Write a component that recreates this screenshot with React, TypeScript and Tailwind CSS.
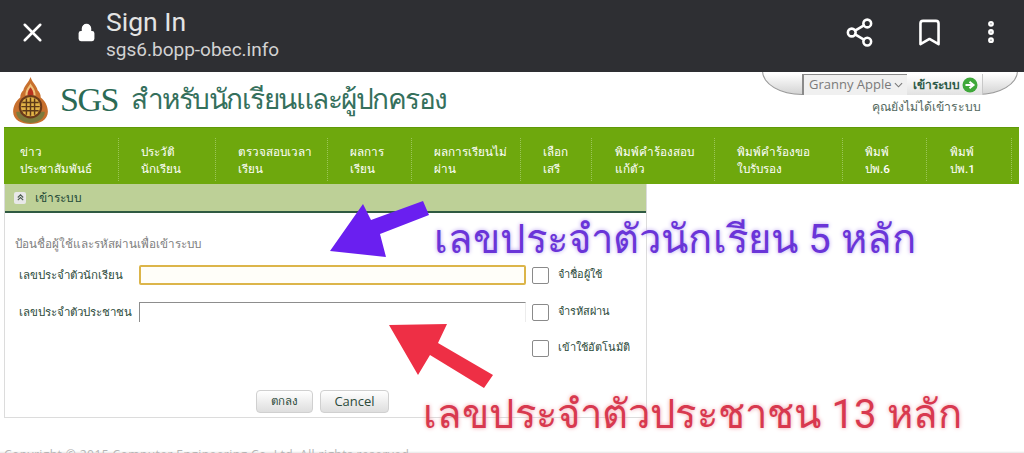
import { Bookmark, Lock, MoreVertical, Share2, X } from "lucide-react";

const menu = [
  { a: "ข่าว", b: "ประชาสัมพันธ์", w: "w-[115px]", p: "pl-[16px]" },
  { a: "ประวัติ", b: "นักเรียน", w: "w-[97px]", p: "pl-[22px]" },
  { a: "ตรวจสอบเวลา", b: "เรียน", w: "w-[112px]", p: "pl-[22px]" },
  { a: "ผลการ", b: "เรียน", w: "w-[84px]", p: "pl-[22px]" },
  { a: "ผลการเรียนไม่", b: "ผ่าน", w: "w-[109px]", p: "pl-[22px]" },
  { a: "เลือก", b: "เสรี", w: "w-[71px]", p: "pl-[22px]" },
  { a: "พิมพ์คำร้องสอบ", b: "แก้ตัว", w: "w-[123px]", p: "pl-[23px]" },
  { a: "พิมพ์คำร้องขอ", b: "ใบรับรอง", w: "w-[128px]", p: "pl-[22px]" },
  { a: "พิมพ์", b: "ปพ.6", w: "w-[84px]", p: "pl-[22px]" },
  { a: "พิมพ์", b: "ปพ.1", w: "w-[85px]", p: "pl-[23px]" },
];

function Check({ label }: { label: string }) {
  return (
    <div className="flex items-center h-[18px]">
      <div className="w-[17px] h-[17px] rounded-[2px] border border-[#8a8a8a] bg-white" />
      <span className="ml-[9px] text-[11px] font-medium text-[#2c4a3a]">{label}</span>
    </div>
  );
}

export default function App() {
  return (
    <div className="relative w-[1024px] h-[453px] overflow-hidden bg-white font-['Roboto','Noto_Sans',sans-serif]">
      {/* browser bar */}
      <div className="h-[72px] pb-[8px] bg-[#2e2f33] flex items-center text-white relative z-10">
        <X className="ml-[17px] w-[31px] h-[31px]" strokeWidth={2} />
        <Lock className="ml-[29px] w-[19px] h-[21px] fill-white" strokeWidth={2} />
        <div className="ml-[10px] flex flex-col mt-[4px]">
          <span className="text-[26.5px] leading-[30px] text-[#e4e4e4]">Sign In</span>
          <span className="text-[19px] leading-[25px] text-[#d2d2d2]">sgs6.bopp-obec.info</span>
        </div>
        <div className="ml-auto flex items-center">
          <Share2 className="w-[31px] h-[31px]" strokeWidth={2} />
          <Bookmark className="ml-[39px] w-[31px] h-[31px]" strokeWidth={2} />
          <MoreVertical className="ml-[32px] mr-[19px] w-[28px] h-[28px]" strokeWidth={3} />
        </div>
      </div>

      {/* logo row */}
      <div className="h-[55px] flex items-center relative">
        <svg viewBox="0 0 34 46" className="ml-[13px] w-[35px] h-[47px] mt-[1px]">
          <path d="M17 0 C19 6 23 8 24 13 C26 15 27 17 27 20 C31 23 34 28 34 34 C34 42 26 46 17 46 C8 46 0 42 0 34 C0 28 3 23 7 20 C7 17 8 15 10 13 C11 8 15 6 17 0Z" fill="#c8702e" />
          <path d="M17 6 C19 10 22 12 22 18 L12 18 C12 12 15 10 17 6Z" fill="#f0c27a" />
          <path d="M17 10 C18.5 12 20 14 20 18 L14 18 C14 14 15.5 12 17 10Z" fill="#b8321f" />
          <path d="M3 34 C3 41 10 45 17 45 C24 45 31 41 31 34Z" fill="#7d7a3c" />
          <circle cx="17" cy="29" r="11.5" fill="#6b3a1a" />
          <circle cx="17" cy="29" r="9.5" fill="#e2b347" />
          <path d="M9 25 H25 M8 29 H26 M9 33 H25 M13 21 V37 M17 20 V38 M21 21 V37" stroke="#5e3a18" strokeWidth="1.4" />
        </svg>
        <span className="ml-[12px] text-[34px] leading-none text-[#2b6a55] font-['Liberation_Serif',serif] tracking-[-1.5px]">SGS</span>
        <span className="ml-[13px] text-[28px] leading-none text-[#35705c] tracking-[-1.5px]">สำหรับนักเรียนและผู้ปกครอง</span>

        <div className="absolute left-[762px] top-[-30px] w-[256px] h-[53px] rounded-b-[40px_24px] border border-[#9a9a9a] bg-gradient-to-b from-white from-[60%] to-[#d4d4d4]" />
        <div className="absolute left-[802px] top-[2px] flex h-[21px] items-center">
          <div className="w-[105px] h-[21px] flex items-center justify-between pl-[5px] pr-[4px] bg-[#f0f0f0] border-l-2 border-t border-[#8a8a8a] text-[13px] text-[#7a7a7a] font-['Open_Sans',sans-serif]">
            <span>Granny Apple</span>
            <svg viewBox="0 0 10 6" className="w-[9px] h-[6px]">
              <path d="M1 1 L5 5 L9 1" fill="none" stroke="#777" strokeWidth="1.2" />
            </svg>
          </div>
          <div className="w-[76px] h-[21px] pl-[6px] flex items-center gap-[2px] bg-gradient-to-b from-white to-[#e2e2e2] border-r border-[#c8c8c8]">
            <span className="text-[12px] font-bold text-[#2d5a48]">เข้าระบบ</span>
            <svg viewBox="0 0 16 16" className="w-[16px] h-[16px]">
              <circle cx="8" cy="8" r="7.5" fill="#3fa83a" />
              <path d="M3.5 8 H10 M7.5 4.8 L11.5 8 L7.5 11.2" fill="none" stroke="#fff" strokeWidth="2" />
            </svg>
          </div>
        </div>
        <span className="absolute right-[43px] top-[26px] text-[12.2px] text-[#52675d]">คุณยังไม่ได้เข้าระบบ</span>
      </div>

      {/* menu */}
      <div className="ml-[4px] w-[1015px] h-[57px] flex items-end pb-[3px] bg-[#6ea80d] border-t border-[#5f9a08]">
        {menu.map((m) => (
          <div
            key={m.a + m.b}
            className={`${m.w} ${m.p} h-[43px] pt-[2px] flex flex-col justify-center border-r border-dotted border-[#9cc658] text-[11.7px] font-medium leading-[16.5px] text-white`}
          >
            <span>{m.a}</span>
            <span>{m.b}</span>
          </div>
        ))}
      </div>

      {/* login panel */}
      <div className="ml-[4px] w-[643px] h-[234px] border-x border-b border-[#dcdcdc]">
        <div className="h-[29px] bg-[#bdd097] border-b-2 border-[#2f5a42] flex items-center pl-[9px]">
          <div className="w-[12px] h-[12px] bg-[#e8e8e8] rounded-[2px] flex items-center justify-center">
            <svg viewBox="0 0 10 10" className="w-[9px] h-[9px]">
              <path d="M2 5 L5 2 L8 5 M2 8 L5 5 L8 8" fill="none" stroke="#4a5a50" strokeWidth="1.2" />
            </svg>
          </div>
          <span className="ml-[9px] text-[12px] font-medium text-[#234a38]">เข้าระบบ</span>
        </div>
        <div className="pl-[10px] pt-[22px]">
          <p className="text-[11.7px] leading-[18px] text-[#7d7d7d]">ป้อนชื่อผู้ใช้และรหัสผ่านเพื่อเข้าระบบ</p>
          <div className="mt-[11px] flex items-center h-[22px]">
            <span className="w-[124px] pl-[4px] pt-[1px] text-[11.5px] font-medium text-[#2c4a3a]">เลขประจำตัวนักเรียน</span>
            <div className="w-[387px] h-[20px] rounded-[2px] border-2 border-[#dcb54a] bg-[#fffef9]" />
            <div className="ml-[6px]">
              <Check label="จำชื่อผู้ใช้" />
            </div>
          </div>
          <div className="mt-[15px] flex items-center h-[22px]">
            <span className="w-[124px] pl-[4px] pt-[1px] text-[11.5px] font-medium text-[#2c4a3a]">เลขประจำตัวประชาชน</span>
            <div className="w-[387px] h-[20px] border-t border-l border-[#8d8d8d] border-r border-r-[#ececec]" />
            <div className="ml-[6px]">
              <Check label="จำรหัสผ่าน" />
            </div>
          </div>
          <div className="mt-[16px] ml-[517px]">
            <Check label="เข้าใช้อัตโนมัติ" />
          </div>
          <div className="mt-[33px] ml-[241px] flex gap-[7px]">
            <button className="w-[57px] h-[23px] rounded-[4px] border border-[#d0d0d0] bg-gradient-to-b from-white to-[#dedede] text-[11.5px] font-medium text-[#2c4a3a]">ตกลง</button>
            <button className="w-[69px] h-[23px] rounded-[4px] border border-[#d0d0d0] bg-gradient-to-b from-white to-[#dedede] text-[13px] text-[#2c4a3a] font-['Open_Sans',sans-serif]">Cancel</button>
          </div>
        </div>
      </div>

      {/* footer */}
      <p className="mt-[29px] pl-[4px] text-[12.1px] leading-[16px] text-[#b5b5b5] tracking-[0.4px] bg-gradient-to-b from-white from-[25%] to-[#e8e8e8] to-[37%] font-['Open_Sans',sans-serif]">Copyright © 2015 Computer Engineering Co.,Ltd. All rights reserved.</p>

      {/* annotations drawn over the screenshot */}
      <svg viewBox="0 0 1024 453" className="absolute inset-0 w-[1024px] h-[453px] pointer-events-none">
        <polygon points="330,251 363,204 371,220 423,201 429,215 380,234 386,257" fill="#6a1ff0" />
        <polygon points="389,325 447,324 438,343 493,375 484,388 430,355 418,375" fill="#ee2f45" />
      </svg>
      <span className="absolute left-[434px] top-[216px] text-[40px] leading-[48px] tracking-[0.15px] whitespace-nowrap text-[#6a35d8] [text-shadow:0_0_4px_#b8a0f0]">เลขประจำตัวนักเรียน 5 หลัก</span>
      <span className="absolute left-[423px] top-[391px] text-[40px] leading-[48px] tracking-[0.15px] whitespace-nowrap text-[#d8394f] [text-shadow:0_0_4px_#f0a0a8]">เลขประจำตัวประชาชน 13 หลัก</span>
    </div>
  );
}
